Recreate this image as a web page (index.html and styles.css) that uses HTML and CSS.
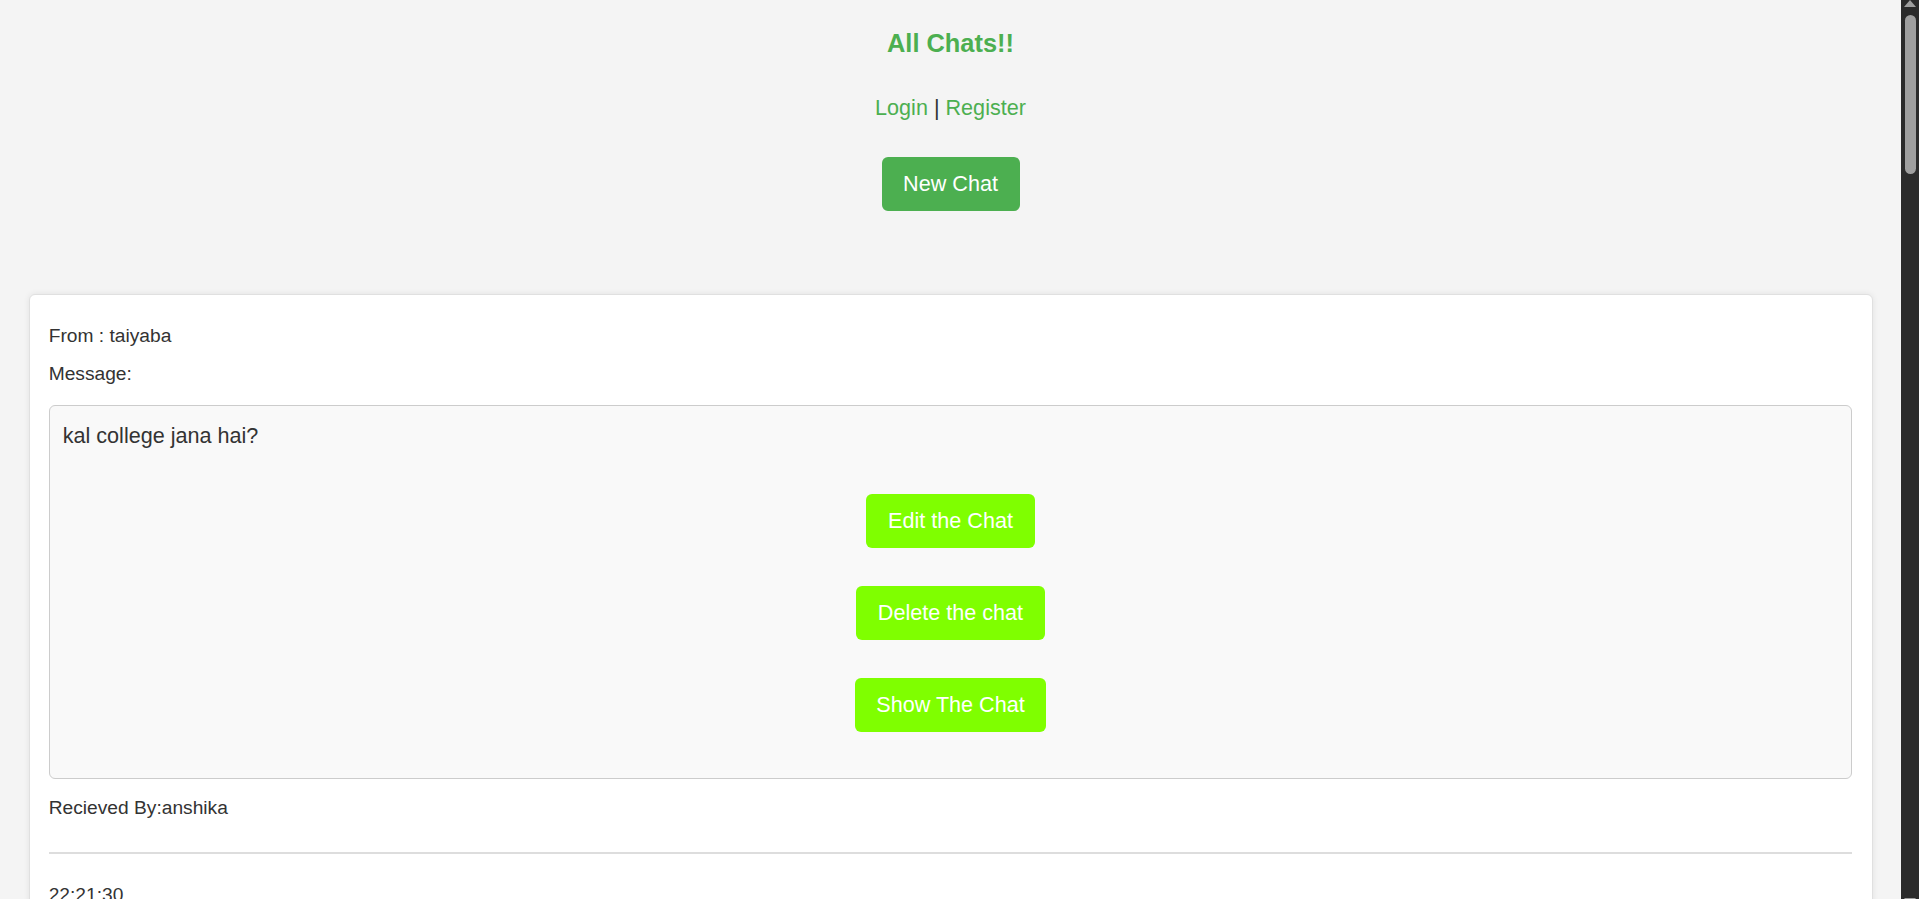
FILE: index.html
```html
<!DOCTYPE html>
<html lang="en">
<head>
<meta charset="utf-8">
<title>All Chats</title>
<link rel="stylesheet" href="styles.css">
</head>
<body>
<div class="page">
  <header class="header">
    <h1 class="title">All Chats!!</h1>
    <p class="auth"><a href="#" class="link">Login</a> | <a href="#" class="link">Register</a></p>
    <button class="btn btn-new">New Chat</button>
  </header>

  <main class="chats">
    <section class="card">
      <p class="line">From : taiyaba</p>
      <p class="line line-gap">Message:</p>
      <div class="msg">
        <p class="msg-text">kal college jana hai?</p>
        <div class="actions">
          <button class="btn btn-lime">Edit the Chat</button>
          <button class="btn btn-lime">Delete the chat</button>
          <button class="btn btn-lime">Show The Chat</button>
        </div>
      </div>
      <p class="line line-recv">Recieved By:anshika</p>
      <div class="rule"></div>
      <p class="line line-time">22:21:30</p>
    </section>
  </main>
</div>

<div class="scrollbar" aria-hidden="true">
  <svg class="arrow arrow-up" width="18" height="17" viewBox="0 0 18 17"><polygon points="9,2 15,9 3,9" fill="#9f9f9f"/></svg>
  <div class="thumb"></div>
  <svg class="arrow arrow-down" width="18" height="17" viewBox="0 0 18 17"><polygon points="3,9 15,9 9,16" fill="#9f9f9f"/></svg>
</div>
</body>
</html>
```

FILE: styles.css
```css
html {
  background: #f4f4f4;
}

body {
  margin: 0;
  background: #f4f4f4;
  color: #333333;
  font-family: "Liberation Sans", Arial, sans-serif;
  font-size: 19.2px;
}

.page {
  margin-right: 18px;
}

.scrollbar {
  position: fixed;
  top: 0;
  right: 0;
  width: 18px;
  height: 100vh;
  background: #2b2b2b;
  display: flex;
  flex-direction: column;
}

.arrow {
  display: block;
  flex: none;
}

.arrow-up {
  margin-top: -2px;
}

.thumb {
  flex: none;
  width: 11px;
  height: 159px;
  margin: 0 0 0 4px;
  border-radius: 6px;
  background: #9f9f9f;
}

.arrow-down {
  margin-top: auto;
  margin-bottom: -7px;
}

.header {
  text-align: center;
  padding-top: 28px;
}

.title {
  margin: 0;
  font-size: 25.4px;
  line-height: 30px;
  font-weight: bold;
  color: #4caf50;
}

.auth {
  margin: 36.5px 0 0;
  font-size: 21.6px;
  line-height: 26px;
  color: #333333;
}

.link {
  color: #4caf50;
  text-decoration: none;
}

.btn {
  display: inline-block;
  border: none;
  border-radius: 6px;
  padding: 14px 21.6px;
  font-family: "Liberation Sans", Arial, sans-serif;
  font-size: 21.6px;
  line-height: 26px;
  color: #ffffff;
  cursor: pointer;
}

.btn-new {
  margin-top: 36.8px;
  background: #4caf50;
}

.btn-lime {
  background: #7fff00;
}

.chats {
  display: flex;
  flex-direction: column;
  gap: 28.8px;
  padding: 82.3px 28.5px 28.8px;
}

.card {
  background: #ffffff;
  border: 1px solid #e0e0e0;
  border-radius: 6px;
  box-shadow: 0 0 6px rgba(0, 0, 0, 0.08);
  padding: 30.3px 19.2px 30px;
}

.line {
  margin: 0;
  font-size: 19.2px;
  line-height: 22px;
}

.line-gap {
  margin-top: 16.4px;
}

.msg {
  margin-top: 19.3px;
  background: #f9f9f9;
  border: 1px solid #cccccc;
  border-radius: 6px;
  padding: 17.5px 13px 45.3px;
}

.msg-text {
  margin: 0;
  font-size: 21.6px;
  line-height: 26px;
}

.actions {
  margin-top: 45.2px;
  display: flex;
  flex-direction: column;
  align-items: center;
  gap: 38px;
}

.line-recv {
  margin-top: 18.1px;
}

.rule {
  margin-top: 32.9px;
  height: 2px;
  background: #dddddd;
}

.line-time {
  margin-top: 30.1px;
}
```
